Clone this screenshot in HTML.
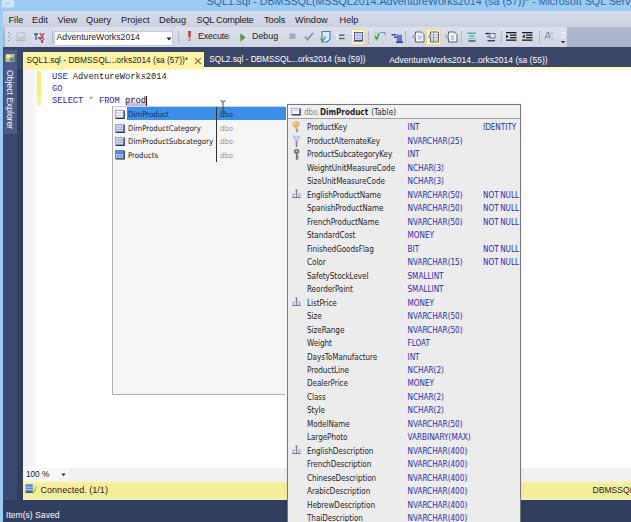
<!DOCTYPE html>
<html><head><meta charset="utf-8">
<title>SQL1.sql</title>
<style>
html,body{margin:0;padding:0;}
body{width:631px;height:522px;overflow:hidden;position:relative;background:#303e60;font-family:"Liberation Sans",sans-serif;font-size:9px;color:#1e1e1e;}
.a{position:absolute;white-space:nowrap;}
#topnavy{left:0;top:47.2px;width:631px;height:22px;background:#3a4567;}
#title{left:0;top:0;width:631px;height:11px;background:#9ccbf4;overflow:hidden;}
#title span{position:absolute;left:206.5px;top:-5.1px;font-size:10.66px;color:#2f64a8;}
#lborder{left:0;top:0;width:3px;height:522px;background:#9ccbf4;}
#menu{left:3px;top:11px;width:628px;height:15.5px;background:linear-gradient(#d6dce9,#ccd1e2);}
#menu span{position:absolute;top:3.6px;font-size:9.2px;color:#1a1a1a;}
#tray{left:3px;top:26.5px;width:628px;height:20.7px;background:linear-gradient(#b3bcd0,#a9b4ca 40%);}
#tool{left:5px;top:26.8px;width:562px;height:20.2px;background:linear-gradient(#dde0ec,#d0d4e3);border-radius:0 2px 2px 0;}
#combo{left:54px;top:30.5px;width:119px;height:15px;background:#fff;border:1px solid #c5cadb;box-sizing:border-box;}
.tsep{top:31px;width:1px;height:13px;background:#b3bace;}
.tt{font-size:8.9px;color:#222;top:31.3px;}
.hl{top:29px;height:16px;background:#fcf5c6;border:1px solid #ecd88e;box-sizing:border-box;}
#tab1{left:23.3px;top:52px;width:181.2px;height:16.5px;background:#fff3a8;}
#tabline{left:23px;top:66.5px;width:608px;height:3px;background:#fdf9cc;}
.tabt{font-size:8.6px;top:55px;}
#editor{left:23px;top:68px;width:608px;height:399.5px;background:#fff;}
#margin{left:23px;top:69px;width:13px;height:398px;background:linear-gradient(90deg,#f1f1f5,#f7f7f9);}
#chg{left:37px;top:71px;width:4px;height:35px;background:linear-gradient(#f4ee74 60%,#f8f4a8);}
#hlprod{left:126px;top:96.5px;width:20px;height:9.6px;background:linear-gradient(#efe9f5 55%,#cfb6de 75%);}
#caret{left:146px;top:96px;width:1px;height:10px;background:#222;}
.code{font-family:"Liberation Mono",monospace;font-size:8.7px;left:52px;color:#222;line-height:10px;}
.kw{color:#2828b8;}
#zoomrow{left:23px;top:467.5px;width:608px;height:14px;background:#f1f1f3;}
#zoombox{left:23px;top:467.5px;width:46px;height:13.5px;background:#f7f7f9;}
#status{left:23px;top:480.7px;width:608px;height:19.8px;background:linear-gradient(#faf6c4,#f4ee9c 3px,#f4ee9c 16px,#f7f2b4 17.5px);}
#strip{left:3px;top:47px;width:14px;height:453px;background:#39486e;}
#oe{left:4px;top:49.5px;width:12.5px;height:84px;background:#495b86;}
#oet{left:15px;top:70px;transform-origin:0 0;transform:rotate(90deg);color:#fff;font-size:8.6px;}
#list{left:112px;top:106px;width:172.5px;height:289px;background:#f5f5f6;border-left:1px solid #b0b0b0;border-bottom:1px solid #b0b0b0;border-top:1px solid #d0d0d0;box-sizing:border-box;}
#sel{left:127px;top:106.8px;width:159px;height:13.4px;background:#3b8fe8;}
#sep{left:216px;top:107px;width:1px;height:55px;background:#333;}
.li{font-family:"DejaVu Sans Condensed","DejaVu Sans",sans-serif;font-size:7.8px;left:128px;color:#222;line-height:10px;}
.ld{font-family:"DejaVu Sans Condensed","DejaVu Sans",sans-serif;font-size:7.6px;left:220px;color:#999;line-height:10px;}
#panel{left:286.5px;top:104px;width:234.5px;height:430px;background:#ececed;border:1px solid #777;box-sizing:border-box;box-shadow:0 0 5px rgba(0,0,0,0.07);}
#phead{left:287.5px;top:105px;width:232.5px;height:13px;background:#f1f1f1;border-bottom:1px solid #a0a0a0;}
#ptitle{left:304px;top:106.5px;font-family:"DejaVu Sans Condensed","DejaVu Sans",sans-serif;font-size:8.1px;line-height:10px;}
.pr{left:0;width:631px;height:10px;line-height:10px;font-family:"DejaVu Sans Condensed","DejaVu Sans",sans-serif;font-size:8.1px;}
.pr span{position:absolute;top:0;}
.pn{left:307px;color:#262626;letter-spacing:-0.08px;}
.pt{left:407.5px;color:#2b2bb0;}
.px{left:483px;color:#2b2bb0;word-spacing:-0.8px;}
</style></head><body>
<div class="a" id="topnavy"></div>
<div class="a" id="title"><span>SQL1.sql - DBMSSQL(MSSQL2014.AdventureWorks2014 (sa (57))* - Microsoft SQL Server Management Studio</span></div>
<div class="a" id="menu">
<span style="left:5.5px">File</span><span style="left:29px">Edit</span><span style="left:54.5px">View</span><span style="left:83px">Query</span><span style="left:118px">Project</span><span style="left:156px">Debug</span><span style="left:193.5px;letter-spacing:-0.25px">SQL Complete</span><span style="left:261px">Tools</span><span style="left:292px">Window</span><span style="left:336.5px">Help</span>
</div>
<div class="a" id="tray"></div>
<div class="a" id="tool"></div>
<div class="a" id="combo"></div>
<div class="a tt" style="left:56.5px;font-size:8.7px;top:31.5px">AdventureWorks2014</div>
<div class="a tsep" style="left:51.5px"></div>
<div class="a tsep" style="left:178px"></div>
<div class="a tt" style="left:198px;letter-spacing:-0.2px">Execute</div>
<div class="a tt" style="left:252px;">Debug</div>
<div class="a" id="lborder"></div>
<div class="a" id="strip"></div>
<div class="a" id="oe"></div>
<div class="a" id="oet">Object Explorer</div>
<div class="a" id="editor"></div>
<div class="a" id="tabline"></div>
<div class="a" id="tab1"></div>
<div class="a tabt" style="left:26.5px;color:#2a2410;font-size:8.38px;">SQL1.sql - DBMSSQL...orks2014 (sa (57))*</div>
<div class="a tabt" style="left:209.3px;color:#fff;font-size:8.27px;">SQL2.sql - DBMSSQL...orks2014 (sa (59))</div>
<div class="a tabt" style="left:389.2px;color:#fff;font-size:8.53px;">AdventureWorks2014...orks2014 (sa (55))</div>
<div class="a" id="margin"></div>
<div class="a" id="chg"></div>
<div class="a" id="hlprod"></div>
<div class="a" id="caret"></div>
<div class="a code" style="top:71.8px"><span class="kw">USE</span> AdventureWorks2014</div>
<div class="a code" style="top:84px"><span class="kw">GO</span></div>
<div class="a code" style="top:96.1px"><span class="kw">SELECT</span> <span style="color:#888">*</span> <span class="kw">FROM</span> prod</div>
<div class="a" id="zoomrow"></div>
<div class="a" id="zoombox"></div>
<div class="a" style="left:25.9px;top:469.9px;font-size:8.25px;">100 %</div>
<div class="a" id="status"></div>
<div class="a" style="left:40.5px;top:484.5px;font-size:9.05px;">Connected. (1/1)</div>
<div class="a" style="left:592.5px;top:485px;font-size:8.6px;">DBMSSQL(MSSQL2014</div>
<div class="a" style="left:6px;top:509.8px;font-size:8.6px;color:#fff;">Item(s) Saved</div>
<div class="a" id="list"></div>
<div class="a" id="sel"></div>
<div class="a" id="sep"></div>
<div class="a li" style="top:110px;color:#0e2a66">DimProduct</div><div class="a ld" style="top:110px;color:#1a3260">dbo</div>
<div class="a li" style="top:123.5px">DimProductCategory</div><div class="a ld" style="top:123.5px">dbo</div>
<div class="a li" style="top:137px">DimProductSubcategory</div><div class="a ld" style="top:137px">dbo</div>
<div class="a li" style="top:150.5px">Products</div><div class="a ld" style="top:150.5px">dbo</div>
<div class="a" id="panel"></div>
<div class="a" id="phead"></div>
<div class="a" id="ptitle"><span style="color:#888">dbo.</span><b>DimProduct</b><span style="margin-left:3px;letter-spacing:0.1px">(Table)</span></div>
<!-- toolbar grip -->
<svg class="a" style="left:8px;top:32px" width="4" height="11" viewBox="0 0 4 11"><g fill="#8e96ad"><rect x="0" y="0" width="1.2" height="1.2"/><rect x="2" y="2" width="1.2" height="1.2"/><rect x="0" y="4" width="1.2" height="1.2"/><rect x="2" y="6" width="1.2" height="1.2"/><rect x="0" y="8" width="1.2" height="1.2"/></g></svg>
<!-- disabled connect icon -->
<svg class="a" style="left:15px;top:31px" width="12" height="12" viewBox="0 0 12 12"><rect x="1" y="1" width="9" height="7" rx="1" fill="#c3c7d3"/><rect x="2" y="2" width="7" height="4" fill="#d5d8e2"/><rect x="0.5" y="8.5" width="10" height="1.6" fill="#b4b9c8"/></svg>
<!-- change connection icon -->
<svg class="a" style="left:32px;top:30px" width="15" height="15" viewBox="0 0 15 15"><rect x="0" y="1" width="15" height="13" fill="#cfe0f2" opacity="0.8"/><path d="M2 4h4M4 4v6M6 8h3" stroke="#4a5068" stroke-width="1.3" fill="none"/><path d="M8 3l4 7M12 3l-4 7" stroke="#c8424a" stroke-width="1.5" fill="none"/><rect x="9" y="10" width="2" height="3" fill="#c8424a"/></svg>
<!-- combo arrow -->
<svg class="a" style="left:166px;top:36.5px" width="6" height="4" viewBox="0 0 6 4"><path d="M0.5 0.5h5L3 3.5z" fill="#222"/></svg>
<!-- execute ! -->
<svg class="a" style="left:186.5px;top:31px" width="5" height="11" viewBox="0 0 5 11"><path d="M1 0h3l-0.5 6.5h-2z" fill="#c4402f"/><rect x="1.3" y="7.6" width="2.4" height="2.4" fill="#b98a6a"/></svg>
<!-- dots after execute -->
<svg class="a" style="left:228px;top:36.5px" width="3" height="2" viewBox="0 0 3 2"><rect x="0.5" y="0.3" width="1.4" height="1.2" fill="#8a90a4"/></svg>
<!-- debug play -->
<svg class="a" style="left:240px;top:32.5px" width="6" height="9" viewBox="0 0 6 9"><path d="M0.3 0.3L5.6 4.5L0.3 8.7z" fill="#4f9a3c"/></svg>
<!-- stop -->
<svg class="a" style="left:288.5px;top:32.5px" width="7" height="7" viewBox="0 0 7 7"><rect x="0.5" y="0.5" width="6" height="5.5" fill="#a4abbd"/></svg>
<!-- check -->
<svg class="a" style="left:303.5px;top:32px" width="10" height="9" viewBox="0 0 10 9"><path d="M1 4.5l2.6 3L9 1" stroke="#808aa2" stroke-width="1.5" fill="none"/></svg>
<!-- icon A doc w/ check -->
<svg class="a" style="left:320px;top:31px" width="11" height="12" viewBox="0 0 11 12"><path d="M2 0.5h8v8l-3 2.5h-5z" fill="#dbe9fb" stroke="#4d78c4" stroke-width="1.1"/><path d="M0.5 7.5l2 2.6l3-4.5" stroke="#4aa845" stroke-width="1.5" fill="none"/></svg>
<!-- icon B lines -->
<svg class="a" style="left:336px;top:33.5px" width="9" height="7" viewBox="0 0 9 7"><rect x="0" y="0.5" width="2" height="1.5" fill="#fff"/><rect x="3" y="0.5" width="5.5" height="1.4" fill="#59607a"/><rect x="0" y="3.8" width="2" height="1.5" fill="#fff"/><rect x="3" y="3.8" width="5.5" height="1.4" fill="#59607a"/></svg>
<!-- highlighted C grid -->
<div class="a hl" style="left:350.5px;width:14.5px"></div>
<svg class="a" style="left:353.5px;top:32px" width="9" height="10" viewBox="0 0 9 10"><rect x="0.5" y="0.5" width="8" height="8.5" fill="#eef2ff" stroke="#4a58b8" stroke-width="1"/><path d="M0.5 3.3h8M0.5 6h8M3.3 0.5v8.5M6 0.5v8.5" stroke="#8a96dc" stroke-width="0.8"/><rect x="0.5" y="8.2" width="8" height="1.2" fill="#2d3a98"/></svg>
<div class="a tsep" style="left:368px"></div>
<!-- icon D -->
<svg class="a" style="left:372.5px;top:31px" width="13" height="12" viewBox="0 0 13 12"><rect x="1" y="1" width="5" height="9" fill="#b9dcc0"/><path d="M2 5l1.8 3l2.5-6" stroke="#3f9c4c" stroke-width="1.4" fill="none"/><path d="M7 1.5h5v3" stroke="#7f8fc0" stroke-width="1.2" fill="none"/><rect x="7.5" y="3" width="4" height="4" fill="#cfd9f0"/></svg>
<!-- icon E -->
<svg class="a" style="left:390.5px;top:31.5px" width="12" height="12" viewBox="0 0 12 12"><rect x="0.5" y="2" width="5" height="1.5" fill="#3b4aa0"/><rect x="3" y="4.5" width="5" height="1.5" fill="#3b4aa0"/><rect x="6" y="2.5" width="5" height="7.5" fill="#5d78d8"/><rect x="7" y="1" width="3" height="2" fill="#c8d4f4"/><rect x="5" y="9.5" width="7" height="1.5" fill="#2c3a8c"/></svg>
<div class="a tsep" style="left:405px"></div>
<!-- icon F doc -->
<svg class="a" style="left:411.5px;top:31px" width="13" height="12" viewBox="0 0 13 12"><path d="M3.5 1h6l2.5 2.5v7.5h-8.5z" fill="#f4f6fb" stroke="#5a6072" stroke-width="1"/><path d="M3.5 3L0.8 5.5L3.5 8" fill="#d0d6e6" stroke="#6a7086" stroke-width="0.9"/><rect x="6" y="4.5" width="3.5" height="4" fill="#a9c4f2"/></svg>
<!-- highlighted G -->
<div class="a hl" style="left:425.5px;width:15px"></div>
<svg class="a" style="left:427.5px;top:31px" width="12" height="12" viewBox="0 0 12 12"><path d="M2.5 1h8v10h-8z" fill="#f4f6fb" stroke="#5a6072" stroke-width="1"/><path d="M2.5 4h8M2.5 6.5h8M2.5 9h8M5.5 1v10" stroke="#8a92a8" stroke-width="0.8"/><path d="M2.5 3L0.6 5.5L2.5 8" fill="#d0d6e6" stroke="#6a7086" stroke-width="0.9"/></svg>
<!-- icon H doc -->
<svg class="a" style="left:444.5px;top:31px" width="13" height="12" viewBox="0 0 13 12"><path d="M3.5 1h6l2.5 2.5v7.5h-8.5z" fill="#f4f6fb" stroke="#5a6072" stroke-width="1"/><path d="M3.5 3L0.8 5.5L3.5 8" fill="#d0d6e6" stroke="#6a7086" stroke-width="0.9"/><rect x="6" y="4" width="3" height="5" fill="#b9cdf2"/></svg>
<div class="a tsep" style="left:461px"></div>
<!-- icon I teal lines -->
<svg class="a" style="left:467px;top:32px" width="10" height="10" viewBox="0 0 10 10"><rect x="0.5" y="0.5" width="8.5" height="1.5" fill="#3db7ae"/><rect x="2.5" y="3.3" width="5" height="1.5" fill="#3db7ae"/><rect x="0.5" y="6" width="8.5" height="1.3" fill="#7ad0ca"/><rect x="1.5" y="8.3" width="7" height="1.3" fill="#39405a"/></svg>
<!-- icon J -->
<svg class="a" style="left:485px;top:32px" width="11" height="10" viewBox="0 0 11 10"><rect x="0.5" y="0.8" width="4" height="1.5" fill="#2a3050"/><rect x="5" y="1.5" width="5" height="4.5" fill="#e8ecf8" stroke="#4a5a98" stroke-width="0.8"/><rect x="2" y="4" width="3" height="1.4" fill="#4e68c0"/><rect x="2.5" y="8" width="7.5" height="1.4" fill="#39405a"/></svg>
<div class="a tsep" style="left:500.5px"></div>
<!-- indent icons -->
<svg class="a" style="left:505.5px;top:32px" width="11" height="9" viewBox="0 0 11 9"><g fill="#1b1b22"><rect x="0" y="0" width="10.5" height="1.3"/><rect x="4" y="2.5" width="6.5" height="1.3"/><rect x="4" y="5" width="6.5" height="1.3"/><rect x="0" y="7.5" width="10.5" height="1.3"/><path d="M0 2.6L2.8 4.4L0 6.2z"/></g></svg>
<svg class="a" style="left:522px;top:32px" width="11" height="9" viewBox="0 0 11 9"><g fill="#1b1b22"><rect x="0" y="0" width="10.5" height="1.3"/><rect x="4" y="2.5" width="6.5" height="1.3"/><rect x="4" y="5" width="6.5" height="1.3"/><rect x="0" y="7.5" width="10.5" height="1.3"/><path d="M2.8 2.6L0 4.4L2.8 6.2z"/></g></svg>
<div class="a tsep" style="left:538.5px"></div>
<!-- icon M gray A -->
<svg class="a" style="left:543.5px;top:31px" width="10" height="11" viewBox="0 0 10 11"><path d="M1 8L3.2 1.5h1.2L6.5 8M1.8 5.8h3.6" stroke="#8b93a8" stroke-width="1.2" fill="none"/><rect x="6.5" y="0.5" width="2.5" height="3" fill="#c2c7d6"/><rect x="6" y="6" width="3.5" height="4" fill="#c9cedb"/></svg>
<!-- overflow -->
<svg class="a" style="left:560px;top:32px" width="6" height="13" viewBox="0 0 6 13"><rect x="1" y="0" width="4" height="1" fill="#f2f4fa"/><rect x="1" y="2.5" width="4" height="1" fill="#f2f4fa"/><rect x="1" y="5" width="4" height="1" fill="#f2f4fa"/><path d="M0.8 9h4.4L3 11.6z" fill="#2a2f40"/></svg>
<!-- tab close x -->
<svg class="a" style="left:193.5px;top:56.5px" width="8" height="8" viewBox="0 0 8 8"><path d="M1 1l6 6M7 1l-6 6" stroke="#857c48" stroke-width="1.1"/></svg>
<!-- OE pin icon -->
<svg class="a" style="left:5px;top:53px" width="10" height="10" viewBox="0 0 10 10"><rect x="0.5" y="1" width="9" height="8" fill="#c9c46a"/><rect x="1.5" y="2" width="4" height="3" fill="#f4f0b0"/><rect x="5" y="4.5" width="4" height="4" fill="#5d7fc4"/></svg>
<!-- zoom arrow -->
<svg class="a" style="left:61px;top:472.5px" width="5" height="4" viewBox="0 0 5 4"><path d="M0.3 0.5h4.4L2.5 3.3z" fill="#333"/></svg>
<!-- status connected icon -->
<svg class="a" style="left:24.8px;top:484px" width="12" height="10" viewBox="0 0 12 10"><rect x="0.5" y="0.3" width="7.5" height="8.6" rx="1" fill="#4f86d6"/><rect x="0.5" y="2.6" width="7.5" height="0.9" fill="#c9dcf6"/><rect x="0.5" y="5.2" width="7.5" height="0.9" fill="#c9dcf6"/><rect x="0.5" y="7.6" width="7.5" height="1.3" fill="#2f4f98"/><path d="M6.8 5.2l1.8 3.4L11.2 3" stroke="#a9bd3a" stroke-width="1.4" fill="none"/></svg>
<!-- I-beam cursor -->
<svg class="a" style="left:219.3px;top:99.5px" width="8" height="13" viewBox="0 0 8 13"><path d="M1.5 1h1.7l0.8 0.8l0.8-0.8H6.5M4 1.8v9.4M1.5 12h1.7l0.8-0.8l0.8 0.8H6.5" stroke="#444" stroke-width="1" fill="none"/></svg>
<svg class="a" style="left:0;top:0" width="15" height="9" viewBox="0 0 15 9"><rect x="2" y="0" width="12" height="7.5" fill="#e2eefa" opacity="0.75"/><rect x="5" y="2" width="5" height="3" fill="#c9d9c0" opacity="0.7"/></svg>
<div class="a pr" style="top:122.3px"><span class="pn">ProductKey</span><span class="pt">INT</span><span class="px">IDENTITY</span></div>
<svg class="a" style="left:291.5px;top:121.3px" width="9" height="12" viewBox="0 0 9 12"><ellipse cx="4" cy="3.3" rx="3.6" ry="3.1" fill="#f1b45c"/><ellipse cx="3.4" cy="2.6" rx="1.6" ry="1.2" fill="#f8d49a"/><path d="M4.2 5.5L6 11.6h-1.6L3.2 6z" fill="#a3957c"/><rect x="5.2" y="8.3" width="1.6" height="1.1" fill="#a3957c"/></svg>
<div class="a pr" style="top:135.8px"><span class="pn">ProductAlternateKey</span><span class="pt">NVARCHAR(25)</span></div>
<svg class="a" style="left:291.8px;top:134.8px" width="9" height="12" viewBox="0 0 9 12"><path d="M0.3 0.8H8.7L5.6 6.2L5.2 12H3.8L3.6 6.2z" fill="#a6bfee"/><path d="M3.7 6.5L5.5 6.5L5.2 12H3.9z" fill="#7f8cb8"/><path d="M2.2 1.8H6.6L4.5 4.6z" fill="#d5e2fa"/></svg>
<div class="a pr" style="top:149.3px"><span class="pn">ProductSubcategoryKey</span><span class="pt">INT</span></div>
<svg class="a" style="left:291.8px;top:148.3px" width="9" height="12" viewBox="0 0 9 12"><circle cx="4.6" cy="3.4" r="2.7" fill="#7d7d7d"/><circle cx="4.6" cy="3" r="0.9" fill="#c8c8c8"/><rect x="3.9" y="5.6" width="1.6" height="6.2" fill="#6f6f6f"/><rect x="5.3" y="8" width="1.7" height="1.1" fill="#6f6f6f"/><rect x="5.3" y="10.2" width="1.3" height="1.1" fill="#6f6f6f"/></svg>
<div class="a pr" style="top:162.7px"><span class="pn">WeightUnitMeasureCode</span><span class="pt">NCHAR(3)</span></div>
<div class="a pr" style="top:176.2px"><span class="pn">SizeUnitMeasureCode</span><span class="pt">NCHAR(3)</span></div>
<div class="a pr" style="top:189.7px"><span class="pn">EnglishProductName</span><span class="pt">NVARCHAR(50)</span><span class="px">NOT NULL</span></div>
<svg class="a" style="left:292.0px;top:189.2px" width="9" height="10" viewBox="0 0 9 10"><rect x="3.4" y="0.3" width="2.2" height="2.4" fill="#a9b0de"/><rect x="4.1" y="0.5" width="0.9" height="7.5" fill="#6e7085"/><rect x="0.6" y="4.6" width="7.8" height="0.8" fill="#9a9eb8"/><rect x="0.2" y="5.2" width="2.2" height="2.8" fill="#b4bae6"/><rect x="6.6" y="5.2" width="2.2" height="2.8" fill="#b4bae6"/><rect x="0.4" y="8" width="8.2" height="0.9" fill="#666a88"/></svg>
<div class="a pr" style="top:203.2px"><span class="pn">SpanishProductName</span><span class="pt">NVARCHAR(50)</span><span class="px">NOT NULL</span></div>
<div class="a pr" style="top:216.7px"><span class="pn">FrenchProductName</span><span class="pt">NVARCHAR(50)</span><span class="px">NOT NULL</span></div>
<div class="a pr" style="top:230.1px"><span class="pn">StandardCost</span><span class="pt">MONEY</span></div>
<div class="a pr" style="top:243.6px"><span class="pn">FinishedGoodsFlag</span><span class="pt">BIT</span><span class="px">NOT NULL</span></div>
<div class="a pr" style="top:257.1px"><span class="pn">Color</span><span class="pt">NVARCHAR(15)</span><span class="px">NOT NULL</span></div>
<div class="a pr" style="top:270.6px"><span class="pn">SafetyStockLevel</span><span class="pt">SMALLINT</span></div>
<div class="a pr" style="top:284.1px"><span class="pn">ReorderPoint</span><span class="pt">SMALLINT</span></div>
<div class="a pr" style="top:297.5px"><span class="pn">ListPrice</span><span class="pt">MONEY</span></div>
<svg class="a" style="left:292.0px;top:297.0px" width="9" height="10" viewBox="0 0 9 10"><rect x="3.4" y="0.3" width="2.2" height="2.4" fill="#a9b0de"/><rect x="4.1" y="0.5" width="0.9" height="7.5" fill="#6e7085"/><rect x="0.6" y="4.6" width="7.8" height="0.8" fill="#9a9eb8"/><rect x="0.2" y="5.2" width="2.2" height="2.8" fill="#b4bae6"/><rect x="6.6" y="5.2" width="2.2" height="2.8" fill="#b4bae6"/><rect x="0.4" y="8" width="8.2" height="0.9" fill="#666a88"/></svg>
<div class="a pr" style="top:311.0px"><span class="pn">Size</span><span class="pt">NVARCHAR(50)</span></div>
<div class="a pr" style="top:324.5px"><span class="pn">SizeRange</span><span class="pt">NVARCHAR(50)</span></div>
<div class="a pr" style="top:338.0px"><span class="pn">Weight</span><span class="pt">FLOAT</span></div>
<div class="a pr" style="top:351.5px"><span class="pn">DaysToManufacture</span><span class="pt">INT</span></div>
<div class="a pr" style="top:364.9px"><span class="pn">ProductLine</span><span class="pt">NCHAR(2)</span></div>
<div class="a pr" style="top:378.4px"><span class="pn">DealerPrice</span><span class="pt">MONEY</span></div>
<div class="a pr" style="top:391.9px"><span class="pn">Class</span><span class="pt">NCHAR(2)</span></div>
<div class="a pr" style="top:405.4px"><span class="pn">Style</span><span class="pt">NCHAR(2)</span></div>
<div class="a pr" style="top:418.9px"><span class="pn">ModelName</span><span class="pt">NVARCHAR(50)</span></div>
<div class="a pr" style="top:432.3px"><span class="pn">LargePhoto</span><span class="pt">VARBINARY(MAX)</span></div>
<div class="a pr" style="top:445.8px"><span class="pn">EnglishDescription</span><span class="pt">NVARCHAR(400)</span></div>
<svg class="a" style="left:292.0px;top:445.3px" width="9" height="10" viewBox="0 0 9 10"><rect x="3.4" y="0.3" width="2.2" height="2.4" fill="#a9b0de"/><rect x="4.1" y="0.5" width="0.9" height="7.5" fill="#6e7085"/><rect x="0.6" y="4.6" width="7.8" height="0.8" fill="#9a9eb8"/><rect x="0.2" y="5.2" width="2.2" height="2.8" fill="#b4bae6"/><rect x="6.6" y="5.2" width="2.2" height="2.8" fill="#b4bae6"/><rect x="0.4" y="8" width="8.2" height="0.9" fill="#666a88"/></svg>
<div class="a pr" style="top:459.3px"><span class="pn">FrenchDescription</span><span class="pt">NVARCHAR(400)</span></div>
<div class="a pr" style="top:472.8px"><span class="pn">ChineseDescription</span><span class="pt">NVARCHAR(400)</span></div>
<div class="a pr" style="top:486.3px"><span class="pn">ArabicDescription</span><span class="pt">NVARCHAR(400)</span></div>
<div class="a pr" style="top:499.7px"><span class="pn">HebrewDescription</span><span class="pt">NVARCHAR(400)</span></div>
<div class="a pr" style="top:513.2px"><span class="pn">ThaiDescription</span><span class="pt">NVARCHAR(400)</span></div>
<svg class="a" style="left:115px;top:109.5px" width="10" height="9" viewBox="0 0 10 9"><rect x="0.5" y="0.5" width="8.5" height="7.5" fill="#f2f4fb" stroke="#8a93c8" stroke-width="0.8"/><path d="M0.5 3h8.5M0.5 5.5h8.5" stroke="#b4bce6" stroke-width="0.7"/><path d="M9.2 0.8v7.6H0.8" stroke="#2a3050" stroke-width="1.2" fill="none"/></svg>
<svg class="a" style="left:115px;top:123.5px" width="10" height="9" viewBox="0 0 10 9"><rect x="0.5" y="0.5" width="8.5" height="7.5" fill="#d6daf5" stroke="#8a93d0" stroke-width="0.8"/><path d="M0.5 3h8.5M0.5 5.5h8.5M3.3 0.5v7.5M6.2 0.5v7.5" stroke="#a2aae2" stroke-width="0.7"/><path d="M9.2 0.8v7.6H0.8" stroke="#2a3050" stroke-width="1.2" fill="none"/></svg>
<svg class="a" style="left:115px;top:137px" width="10" height="9" viewBox="0 0 10 9"><rect x="0.5" y="0.5" width="8.5" height="7.5" fill="#d6daf5" stroke="#8a93d0" stroke-width="0.8"/><path d="M0.5 3h8.5M0.5 5.5h8.5M3.3 0.5v7.5M6.2 0.5v7.5" stroke="#a2aae2" stroke-width="0.7"/><path d="M9.2 0.8v7.6H0.8" stroke="#2a3050" stroke-width="1.2" fill="none"/></svg>
<svg class="a" style="left:115px;top:150px" width="10" height="10" viewBox="0 0 10 10"><rect x="0.5" y="0.5" width="8.5" height="8" fill="#b9c8f0" stroke="#5a78c8" stroke-width="0.8"/><rect x="1" y="1" width="7.5" height="3" fill="#4f8ae0"/><path d="M0.5 6.3h8.5M3.3 4v4.5M6.2 4v4.5" stroke="#6e84d0" stroke-width="0.7"/><path d="M9.2 1v8H0.8" stroke="#2a3050" stroke-width="1.2" fill="none"/></svg>
<svg class="a" style="left:291px;top:107.5px" width="10" height="8" viewBox="0 0 10 8"><rect x="0.5" y="0.5" width="8.5" height="6" fill="#f6f7fc" stroke="#9aa2cc" stroke-width="0.8"/><path d="M0.5 2.6h8.5" stroke="#b4bce6" stroke-width="0.7"/><path d="M9.2 0.8v6.1H0.8" stroke="#2a3050" stroke-width="1.2" fill="none"/></svg>
</body></html>
